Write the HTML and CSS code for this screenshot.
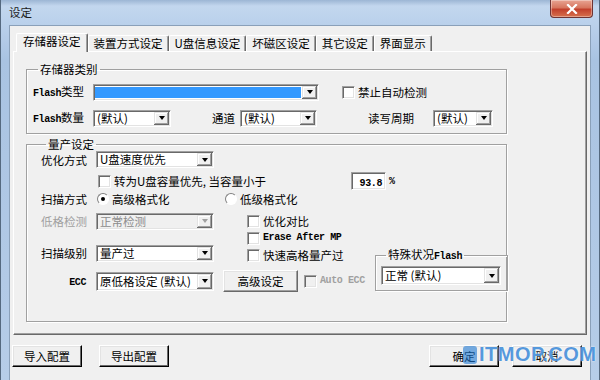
FILE: index.html
```html
<!DOCTYPE html>
<html lang="zh-CN">
<head>
    <meta charset="UTF-8">
    <title>设定</title>
    <link rel="stylesheet" href="styles.css">
</head>
<body>
    <div class="window">
        <div class="titlebar">
            <span class="title">设定</span>
            <div class="close">
                <svg width="12" height="10" viewBox="0 0 12 10">
                    <path d="M2 1 L10 9 M10 1 L2 9" stroke="#fff" stroke-width="2.2" stroke-linecap="square"/>
                </svg>
            </div>
        </div>
        <div class="client">
            <div class="tabs">
                <div class="tab active">存储器设定</div>
                <div class="tab">装置方式设定</div>
                <div class="tab">U盘信息设定</div>
                <div class="tab">坏磁区设定</div>
                <div class="tab">其它设定</div>
                <div class="tab">界面显示</div>
            </div>
            <div class="panel">
                <fieldset class="group group-type">
                    <legend>存储器类别</legend>
                    <div class="row row-first">
                        <span class="lbl w60"><span class="latin">Flash</span>类型</span>
                        <div class="combo selected w226"><span class="val"></span><i class="drop"></i></div>
                        <label class="check ml22"><span class="box"></span>禁止自动检测</label>
                    </div>
                    <div class="row row-second">
                        <span class="lbl w60"><span class="latin">Flash</span>数量</span>
                        <div class="combo w78"><span class="val">(默认)</span><i class="drop"></i></div>
                        <span class="lbl ml41 w28">通道</span>
                        <div class="combo w77"><span class="val">(默认)</span><i class="drop"></i></div>
                        <span class="lbl ml51 w65">读写周期</span>
                        <div class="combo w60"><span class="val">(默认)</span><i class="drop"></i></div>
                    </div>
                </fieldset>

                <fieldset class="group group-prod">
                    <legend>量产设定</legend>
                    <div class="row row-opt">
                        <span class="lbl w55">优化方式</span>
                        <div class="combo w118"><span class="val">U盘速度优先</span><i class="drop"></i></div>
                    </div>
                    <div class="row row-cap">
                        <label class="check cap ml56"><span class="box"></span>转为U盘容量优先, 当容量小于</label>
                        <div class="field percent"><span class="latin">93.8</span></div>
                        <span class="latin unit">%</span>
                    </div>
                    <div class="row row-scan">
                        <span class="lbl w55">扫描方式</span>
                        <label class="radio first"><span class="dot on"></span>高级格式化</label>
                        <label class="radio"><span class="dot"></span>低级格式化</label>
                    </div>
                    <div class="lower">
                        <div class="lower-left">
                            <div class="mid">
                                <div class="mid-combos">
                                    <div class="row">
                                        <span class="lbl w55 disabled">低格检测</span>
                                        <div class="combo w118 off"><span class="val">正常检测</span><i class="drop"></i></div>
                                    </div>
                                    <div class="row row-level">
                                        <span class="lbl w55">扫描级别</span>
                                        <div class="combo w118"><span class="val">量产过</span><i class="drop"></i></div>
                                    </div>
                                </div>
                                <div class="mid-checks">
                                    <label class="check"><span class="box"></span>优化对比</label>
                                    <label class="check"><span class="box"></span><span class="latin">Erase After MP</span></label>
                                    <label class="check"><span class="box"></span>快速高格量产过</label>
                                </div>
                            </div>
                            <div class="row row-ecc">
                                <span class="lbl w55 right"><span class="latin">ECC</span></span>
                                <div class="combo w118 tall"><span class="val">原低格设定 (默认)</span><i class="drop"></i></div>
                                <button class="btn btn-adv">高级设定</button>
                                <label class="check disabled"><span class="box"></span><span class="latin">Auto ECC</span></label>
                            </div>
                        </div>
                        <fieldset class="group group-special">
                            <legend>特殊状况<span class="latin">Flash</span></legend>
                            <div class="combo w120 tall"><span class="val">正常 (默认)</span><i class="drop"></i></div>
                        </fieldset>
                    </div>
                </fieldset>
            </div>
            <div class="footer">
                <button class="btn btn-foot">导入配置</button>
                <button class="btn btn-foot ml17">导出配置</button>
                <button class="btn btn-foot push">确定</button>
                <button class="btn btn-foot ml13">取消</button>
            </div>
        </div>
        <div class="watermark"><span class="mark-logo"></span>ITMOP.COM</div>
    </div>
</body>
</html>
```

FILE: styles.css
```css
body {
    margin: 0;
    width: 600px;
    height: 380px;
    overflow: hidden;
    font-family: "Noto Sans CJK SC", "Noto Sans", sans-serif;
    font-size: 11.5px;
    color: #000;
}
.window {
    position: relative;
    box-sizing: border-box;
    width: 600px;
    height: 380px;
    padding: 0 8px 0 8px;
    background: linear-gradient(180deg, #9cb6d4 0px, #c3d7ee 6px, #bcd2ec 20px, #a9c3e2 60px, #b6cde8 380px);
    border-left: 1px solid #55697f;
    border-right: 1px solid #55697f;
}
.titlebar {
    height: 25px;
    display: flex;
    align-items: flex-start;
    justify-content: space-between;
}
.title {
    margin-top: 4px;
    line-height: 16px;
    color: #1b1b1b;
}
.close {
    width: 43px;
    height: 18px;
    margin-right: -2px;
    box-sizing: border-box;
    border: 1px solid #6e3434;
    border-top: none;
    border-radius: 0 0 4px 4px;
    background: linear-gradient(180deg, #e8a493 0%, #d7765f 45%, #c2402c 55%, #d6714e 100%);
    display: flex;
    align-items: center;
    justify-content: center;
    box-shadow: inset 0 0 0 1px rgba(255, 255, 255, 0.35);
}
.client {
    box-sizing: border-box;
    height: 360px;
    background: #f0f0f0;
    border: 1px solid #8aa0b9;
    padding: 7px 0 0 3px;
}

/* tabs */
.tabs {
    display: flex;
    align-items: flex-end;
    height: 18px;
    padding-left: 3px;
}
.tab {
    height: 16px;
    line-height: 15px;
    padding: 0 5px;
    box-sizing: border-box;
    border-top: 1px solid #fff;
    border-left: 1px solid #fff;
    border-right: 1px solid #696969;
    box-shadow: inset -1px 0 0 #a0a0a0;
    border-radius: 2px 2px 0 0;
    white-space: nowrap;
}
.tab.active {
    height: 19px;
    margin-bottom: -1px;
    padding: 0 6px;
    background: #f0f0f0;
    position: relative;
    z-index: 1;
}
.panel {
    box-sizing: border-box;
    width: 574px;
    height: 284px;
    border: 1px solid;
    border-color: #fff #696969 #696969 #fff;
    box-shadow: inset -1px -1px 0 #a0a0a0;
    padding: 11px 0 0 12px;
}

/* group boxes */
.group {
    margin: 0;
    padding: 0;
    border: 1px solid #a0a0a0;
    box-shadow: 1px 1px 0 #fff, inset 1px 1px 0 #fff;
    min-width: 0;
}
.group legend {
    padding: 0 2px;
    margin-left: 5px;
    line-height: 13px;
}
.group-type {
    width: 481px;
    box-sizing: border-box;
    padding: 7px 0 6px 6px;
}
.group-prod {
    width: 481px;
    box-sizing: border-box;
    margin-top: 4px;
    padding: 0 0 0 14px;
    height: 184px;
}
.group-special {
    width: 133px;
    box-sizing: border-box;
    padding: 3px 0 5px 5px;
    margin-left: auto;
    margin-right: -1px;
    margin-top: 36px;
}

.row {
    display: flex;
    align-items: center;
    height: 18px;
}
.row-second {
    margin-top: 8px;
}
.row-opt {
    height: 17px;
}
.row-cap {
    margin-top: 4px;
}
.row-scan {
    margin-top: 1px;
    height: 15px;
}
.row-level {
    margin-top: 14px;
}
.row-ecc {
    margin-top: 8px;
    height: 22px;
}

.lbl {
    white-space: nowrap;
    line-height: 14px;
}
.lbl.right {
    text-align: right;
    padding-right: 10px;
    box-sizing: border-box;
}
.disabled {
    color: #a0a0a0;
}
.latin {
    font-family: "Liberation Mono", monospace;
    font-size: 10px;
    font-weight: bold;
    letter-spacing: -0.4px;
}

.w28 { width: 28px; }
.w55 { width: 55px; }
.w60 { width: 60px; }
.w65 { width: 65px; }
.w77 { width: 77px; }
.w78 { width: 78px; }
.w118 { width: 118px; }
.w120 { width: 120px; }
.w226 { width: 226px; }
.ml13 { margin-left: 13px; }
.ml17 { margin-left: 17px; }
.ml22 { margin-left: 22px; }
.ml41 { margin-left: 41px; }
.ml51 { margin-left: 51px; }
.ml56 { margin-left: 56px; }

/* combo boxes and fields */
.combo, .field {
    box-sizing: border-box;
    background: #fff;
    border: 1px solid;
    border-color: #a0a0a0 #fff #fff #a0a0a0;
    box-shadow: inset 1px 1px 0 #696969, inset -1px -1px 0 #e3e3e3;
}
.combo {
    display: flex;
    height: 17px;
    padding: 1px;
}
.combo.tall {
    height: 19px;
}
.combo .val {
    flex: 1;
    display: flex;
    align-items: center;
    line-height: 13px;
    padding-left: 2px;
    white-space: nowrap;
}
.combo.selected .val {
    background: #3399ff;
    margin: 1px 1px 1px 0;
}
.combo.off {
    background: #f0f0f0;
    color: #8c8c8c;
}
.drop {
    width: 15px;
    background: #f0f0f0;
    box-shadow: inset -1px -1px 0 #696969, inset 1px 1px 0 #e3e3e3, inset -2px -2px 0 #a0a0a0, inset 2px 2px 0 #fff;
    display: flex;
    align-items: center;
    justify-content: center;
}
.drop::after {
    content: "";
    border-left: 3.5px solid transparent;
    border-right: 3.5px solid transparent;
    border-top: 4px solid #000;
}
.combo.off .drop::after {
    border-top-color: #a0a0a0;
}
.field.percent {
    width: 35px;
    height: 18px;
    text-align: right;
    padding-right: 3px;
    line-height: 16px;
}
.unit {
    margin-left: 3px;
}

/* checkboxes and radios */
.check, .radio {
    display: flex;
    align-items: center;
    white-space: nowrap;
    line-height: 14px;
}
.check.cap {
    width: 254px;
}
.box {
    width: 13px;
    height: 13px;
    box-sizing: border-box;
    background: #fff;
    border: 1px solid;
    border-color: #a0a0a0 #fff #fff #a0a0a0;
    box-shadow: inset 1px 1px 0 #696969, inset -1px -1px 0 #e3e3e3;
    margin-right: 3px;
    margin-left: 1px;
}
.check.disabled .box {
    background: #f0f0f0;
}
.radio.first {
    width: 128px;
    margin-left: 1px;
}
.dot {
    width: 12px;
    height: 12px;
    box-sizing: border-box;
    border-radius: 50%;
    background: #fff;
    border: 1px solid;
    border-color: #808080 #fff #fff #808080;
    margin-right: 3px;
    display: flex;
    align-items: center;
    justify-content: center;
}
.dot.on::after {
    content: "";
    width: 4px;
    height: 4px;
    border-radius: 50%;
    background: #000;
}

/* lower block */
.lower {
    display: flex;
    align-items: flex-start;
    margin-top: 6px;
    width: 466px;
}
.mid {
    display: flex;
}
.mid-checks {
    display: flex;
    flex-direction: column;
    gap: 3px;
    margin-left: 32px;
    padding-top: 2px;
}

/* buttons */
.btn {
    font-family: inherit;
    font-size: 11.5px;
    color: #000;
    background: #f0f0f0;
    border: 1px solid;
    border-color: #fff #696969 #696969 #fff;
    box-shadow: inset -1px -1px 0 #a0a0a0, inset 1px 1px 0 #e3e3e3;
    padding: 0;
    line-height: 14px;
}
.btn-adv {
    width: 75px;
    height: 22px;
    margin-left: 9px;
    margin-right: 5px;
}
.footer {
    display: flex;
    align-items: center;
    margin-top: 10px;
}
.btn-foot {
    width: 70px;
    height: 22px;
    border-color: #fff #000 #000 #fff;
    box-shadow: inset -1px -1px 0 #696969, inset 1px 1px 0 #e3e3e3;
}
.push {
    margin-left: auto;
}
.footer .btn-foot:first-child {
    margin-left: -1px;
}
.footer .btn-foot:last-child {
    margin-right: 8px;
}

/* site watermark over the corner */
.watermark {
    position: absolute;
    left: 462px;
    top: 343px;
    display: flex;
    align-items: center;
    font-family: "Liberation Sans", sans-serif;
    font-weight: bold;
    font-size: 20px;
    color: rgba(30, 120, 210, 0.75);
    text-shadow: 0 0 2px #fff;
    letter-spacing: 0.5px;
}
.mark-logo {
    width: 14px;
    height: 18px;
    margin-right: 2px;
    border-radius: 3px;
    background: rgba(30, 120, 210, 0.6);
}
```
